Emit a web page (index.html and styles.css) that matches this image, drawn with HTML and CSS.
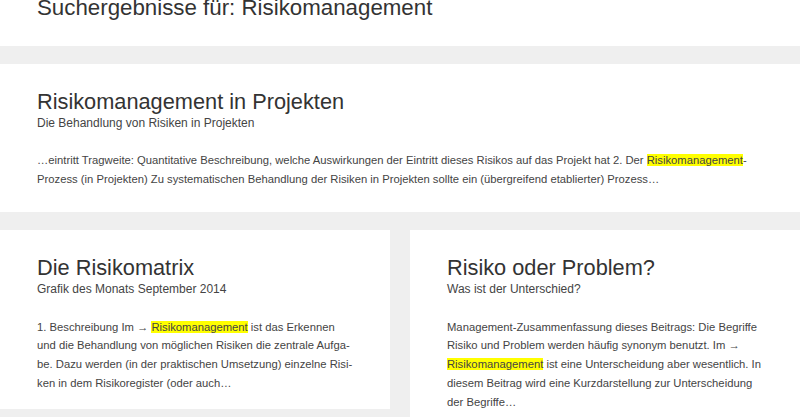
FILE: index.html
```html
<!DOCTYPE html>
<html lang="de">
<head>
<meta charset="utf-8">
<title>Suchergebnisse für: Risikomanagement</title>
<link rel="stylesheet" href="styles.css">
</head>
<body>
<header class="page-header">
  <h1 class="page-title">Suchergebnisse für: Risikomanagement</h1>
</header>
<main class="results">
  <article class="result result-wide">
    <h2 class="result-title">Risikomanagement in Projekten</h2>
    <p class="result-subtitle">Die Behandlung von Risiken in Projekten</p>
    <p class="result-excerpt">…eintritt Tragweite: Quantitative Beschreibung, welche Auswirkungen der Eintritt dieses Risikos auf das Projekt hat 2. Der <mark>Risikomanagement</mark>-<br>Prozess (in Projekten) Zu systematischen Behandlung der Risiken in Projekten sollte ein (übergreifend etablierter) Prozess…</p>
  </article>
  <article class="result">
    <h2 class="result-title">Die Risikomatrix</h2>
    <p class="result-subtitle">Grafik des Monats September 2014</p>
    <p class="result-excerpt">1. Beschreibung Im → <mark>Risikomanagement</mark> ist das Erkennen<br>und die Behandlung von möglichen Risiken die zentrale Aufga-<br>be. Dazu werden (in der praktischen Umsetzung) einzelne Risi-<br>ken in dem Risikoregister (oder auch…</p>
  </article>
  <article class="result">
    <h2 class="result-title">Risiko oder Problem?</h2>
    <p class="result-subtitle">Was ist der Unterschied?</p>
    <p class="result-excerpt">Management-Zusammenfassung dieses Beitrags: Die Begriffe<br>Risiko und Problem werden häufig synonym benutzt. Im →<br><mark>Risikomanagement</mark> ist eine Unterscheidung aber wesentlich. In<br>diesem Beitrag wird eine Kurzdarstellung zur Unterscheidung<br>der Begriffe…</p>
  </article>
</main>
</body>
</html>
```
FILE: styles.css
```css
html, body {
  margin: 0;
  padding: 0;
}

body {
  background: #efefef;
  font-family: "Liberation Sans", Arial, sans-serif;
  color: #444;
  overflow: hidden;
}

.page-header {
  background: #fff;
  height: 46px;
  padding: 0 37px;
  overflow: hidden;
}

.page-title {
  margin: -5px 0 0;
  font-size: 22.3px;
  line-height: 26px;
  font-weight: normal;
  color: #333;
}

.results {
  display: grid;
  grid-template-columns: 1fr 1fr;
  column-gap: 20px;
  row-gap: 18px;
  margin-top: 18px;
  align-items: start;
}

.result {
  background: #fff;
  padding: 25px 20px 16px 37px;
}

.result-wide {
  grid-column: 1 / span 2;
  padding-bottom: 23px;
}

.result-title {
  margin: 0;
  font-size: 21.75px;
  line-height: 26px;
  font-weight: normal;
  color: #333;
}

.result-subtitle {
  margin: 0;
  font-size: 12px;
  line-height: 16px;
  color: #444;
}

.result-excerpt {
  margin: 21px 0 0;
  font-size: 11.25px;
  line-height: 18.75px;
  color: #444;
  white-space: nowrap;
}

.result-wide .result-excerpt {
  margin-top: 20px;
}

mark {
  background: #ffff00;
  color: inherit;
}
```
